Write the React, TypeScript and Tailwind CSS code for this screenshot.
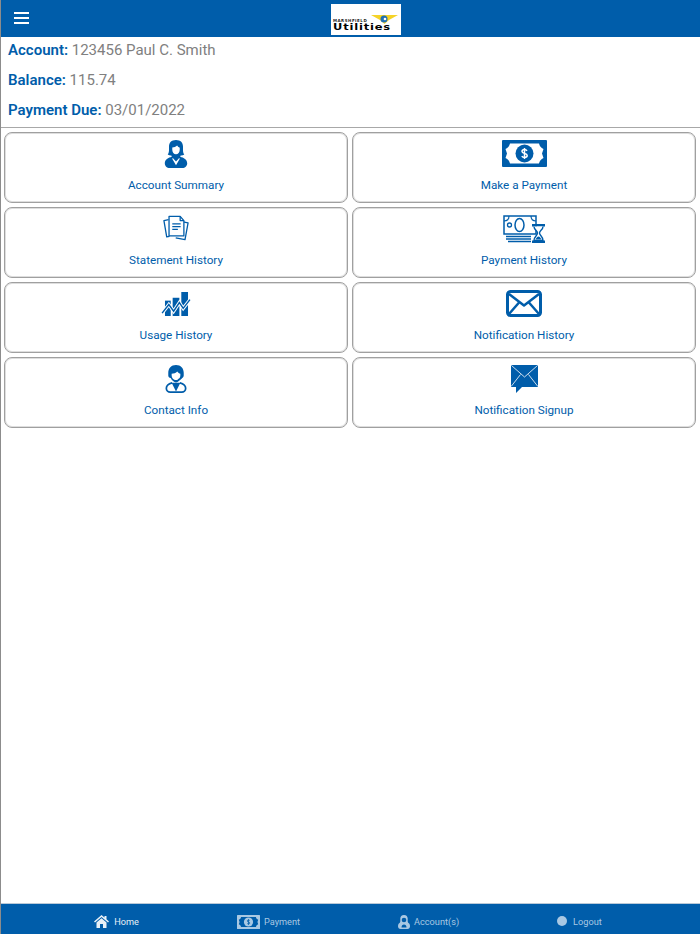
import { ReactNode } from "react";

const BLUE = "#005daa";

function AgentIcon() {
  return (
    <svg width="24" height="28" viewBox="0 0 24 30" fill={BLUE}>
      <path d="M12 0C7 0 4.500 3 4.500 7v4c0 2-.6 3.600-1.400 4.600 1.300.8 2.700 1 3.900.9L7.500 18C3.800 19 0 20.800 0 25c0 2.600 2 5 4 5h16c2 0 4-2.400 4-5 0-4.200-3.800-6-7.500-7l.5-1.500c1.200.1 2.600-.1 3.900-.9C20 14.600 19.500 13 19.500 11V7c0-4-2.500-7-7.500-7z" />
      <path d="M8 8c2 0 3.900-.6 5.200-2 .8 1.300 1.800 2 2.800 2.300v2.200c0 2.700-1.700 4.800-4 4.800s-4-2.100-4-4.800z" fill="#fff" />
      <path d="M8.800 19.500 12 23l3.200-3.500 1 .4L12 27l-4.200-7.100z" fill="#fff" />
    </svg>
  );
}

function CashIcon({ fill = BLUE, hole = "#fff", w = 45, h = 27 }: { fill?: string; hole?: string; w?: number; h?: number }) {
  return (
    <svg width={w} height={h} viewBox="0 0 45 27">
      <rect width="45" height="27" rx="1" fill={fill} />
      <path d="M8 3.500h29c.5 2.500 2 4.500 4.500 5.500l-1.500 4.500 1.500 4.500c-2.500 1-4 3-4.500 5.500H8c-.5-2.500-2-4.500-4.500-5.500L5 13.500 3.500 9C6 8 7.500 6 8 3.500z" fill={hole} />
      <circle cx="22.500" cy="13.500" r="9" fill={fill} />
      <path d="M25 10.800c-.5-.8-1.400-1.200-2.500-1.200-1.400 0-2.500.8-2.500 1.900 0 2.600 5.200 1.400 5.200 4 0 1.100-1.200 1.900-2.700 1.900-1.200 0-2.200-.5-2.700-1.300M22.500 8v11" fill="none" stroke={hole} strokeWidth="1.500" />
    </svg>
  );
}

function DocsIcon() {
  return (
    <svg width="26" height="26" viewBox="0 0 28 27" fill="none" stroke={BLUE} strokeWidth="1.400" strokeLinejoin="round">
      <path d="M6 4.500 1 5.500l3 17.500 3-.6" />
      <path d="M21.500 7 27 8l-3.300 18-10-1.800" />
      <path d="M6.500 1h12l4 4.500V22h-16z" fill="#fff" />
      <path d="M18.500 1v4.500h4" />
      <path d="M10 9h9M10 12h9M10 15h6" strokeWidth="1.500" />
    </svg>
  );
}

function CashHourglassIcon() {
  return (
    <svg width="42" height="28" viewBox="0 0 42 28" fill="none" stroke={BLUE}>
      <rect x="1" y="1" width="32" height="18" strokeWidth="1.500" />
      <path d="M1 6c3 0 5-2 5-5M28 1c0 3 2 5 5 5" strokeWidth="1.200" />
      <ellipse cx="16.500" cy="10" rx="4.500" ry="6.500" strokeWidth="1.500" />
      <circle cx="6.500" cy="10" r="2" strokeWidth="1.300" />
      <path d="M3 21.500h25M3 24h25M5 26.500h23" strokeWidth="1.300" />
      <path d="M29 9h13v2.500H29zM29 25.500h13V28H29z" fill={BLUE} stroke="#fff" strokeWidth="0" />
      <path d="M31 11.500c0 3.500 3.500 3.800 3.500 6.500S31 21.500 31 25.500h9c0-4-3.500-5-3.500-7.500s3.500-3 3.500-6.500" fill="#fff" strokeWidth="1.400" />
      <path d="M32.500 24.500c1-2 2-3 3-3s2 1 3 3z" fill={BLUE} stroke="none" />
    </svg>
  );
}

function ChartIcon() {
  return (
    <svg className="mt-[2px]" width="31" height="24" viewBox="0 0 30 25" fill={BLUE}>
      <rect x="3" y="9" width="6" height="16" />
      <rect x="11" y="6" width="7" height="19" />
      <rect x="20" y="0" width="7" height="25" />
      <path d="M0 22 7 13l5 7 6-9 4 6 7-9" fill="none" stroke="#fff" strokeWidth="3.500" />
      <path d="M0 22 7 13l5 7 6-9 4 6 7-9" fill="none" stroke={BLUE} strokeWidth="1.500" />
    </svg>
  );
}

function HeadsetIcon() {
  return (
    <svg width="22" height="28" viewBox="0 0 22 29" fill="none">
      <path d="M11 0C6 0 3 3.500 3 8v3c0 1.500 1 2.500 2.500 2.500C6.700 16 9 18 11 18c2 0 4.300-2 5.500-4.500 1.500 0 2.500-1 2.500-2.500V8c0-4.500-3-8-8-8z" fill={BLUE} />
      <path d="M6.500 9c2 0 4.500-.8 5.800-2.300.9 1.200 2 2 3.200 2.300v1.500c0 2.800-2 5-4.500 5s-4.500-2.200-4.500-5z" fill="#fff" />
      <path d="M17.500 11c0 3-2 4-4.500 4" stroke={BLUE} strokeWidth="1.200" />
      <path d="M7 18.500C3.500 19.500 1 21 1 24c0 2.500 2 4 4 4h12c2 0 4-1.500 4-4 0-3-2.500-4.500-6-5.500" stroke={BLUE} strokeWidth="1.800" />
      <path d="M6.500 18.500h9L11 27.500z" fill={BLUE} />
    </svg>
  );
}

function EnvelopeIcon() {
  return (
    <svg width="36" height="27" viewBox="0 0 36 27" fill="none" stroke={BLUE} strokeWidth="3" strokeLinejoin="round">
      <rect x="1.500" y="1.500" width="33" height="24" rx="3" />
      <path d="M3 4 18 15.500 33 4M3 24l10.500-12M33 24 22.500 12" strokeWidth="2.500" />
    </svg>
  );
}

function MailBubbleIcon() {
  return (
    <svg width="27" height="28" viewBox="0 0 27 28">
      <path d="M0 1a1 1 0 0 1 1-1h25a1 1 0 0 1 1 1v20a1 1 0 0 1-1 1H11l-6 6v-6H1a1 1 0 0 1-1-1z" fill={BLUE} />
      <path d="M.5.500 13.500 12 26.500.500M.5 21l9-11.500M26.500 21l-9-11.500" fill="none" stroke="#fff" strokeWidth=".8" />
    </svg>
  );
}

function HomeIcon() {
  return (
    <svg width="15" height="13" viewBox="0 0 15 13" fill="#e8f0f7">
      <path d="M7.500 0 0 6.500l1 1 6.500-5.500L14 7.500l1-1-2.500-2.200V1h-2v1.600z" />
      <path d="M2.500 7.500 7.500 3.200l5 4.300V13H9V9H6v4H2.500z" />
    </svg>
  );
}

function PersonIcon() {
  return (
    <svg width="12" height="14" viewBox="0 0 12 14" fill="#a9c8e3">
      <path d="M6 0C3.500 0 2.300 1.600 2.300 3.600V6c0 1-.4 1.600-.8 2C.5 8.700 0 9.800 0 11.200 0 12.800 1 14 2.500 14h7c1.500 0 2.500-1.200 2.500-2.800 0-1.400-.5-2.500-1.500-3.200-.4-.4-.8-1-.8-2V3.600C9.700 1.600 8.500 0 6 0z" />
      <circle cx="6" cy="5" r="2.300" fill={BLUE} />
      <path d="M3.500 12.500c0-2 1-3 2.500-3s2.500 1 2.500 3z" fill={BLUE} />
    </svg>
  );
}

const tiles: { label: string; icon: ReactNode }[] = [
  { label: "Account Summary", icon: <AgentIcon /> },
  { label: "Make a Payment", icon: <CashIcon /> },
  { label: "Statement History", icon: <DocsIcon /> },
  { label: "Payment History", icon: <CashHourglassIcon /> },
  { label: "Usage History", icon: <ChartIcon /> },
  { label: "Notification History", icon: <EnvelopeIcon /> },
  { label: "Contact Info", icon: <HeadsetIcon /> },
  { label: "Notification Signup", icon: <MailBubbleIcon /> },
];

export default function App() {
  return (
    <div className="h-[934px] flex flex-col bg-white font-['Roboto',sans-serif] overflow-hidden border-l border-[#8c8c8c]">
      {/* Header */}
      <header className="h-[37px] shrink-0 bg-[#005daa] flex items-center relative">
        <div className="ml-[13px] flex flex-col gap-[3px] w-[15px] -mt-[1px]">
          <span className="h-[2px] bg-white" />
          <span className="h-[2px] bg-white" />
          <span className="h-[2px] bg-white" />
        </div>
        <div className="absolute left-[330px] top-[4px] w-[70px] h-[31px] bg-white flex flex-col items-start pt-[15px] pl-[2px] overflow-hidden">
          <svg className="absolute left-[40px] top-[11px]" width="27" height="10" viewBox="0 0 27 10">
            <path d="M0 0h27l-9 5-4.500 4L9 5z" fill="#f5d327" />
            <circle cx="13" cy="4" r="3.500" fill="#1f6fb2" />
            <circle cx="14" cy="4" r="1.300" fill="#fff" />
          </svg>
          <span className="relative text-[4px] leading-[4px] font-bold text-[#222] tracking-[0.5px] font-['DejaVu_Sans',sans-serif]">MARSHFIELD</span>
          <span className="relative text-[8.500px] leading-[8px] font-bold text-black tracking-[0.6px] font-['DejaVu_Sans',sans-serif] scale-x-[1.35] origin-left">Utilities</span>
        </div>
      </header>

      {/* Account info */}
      <div className="h-[91px] shrink-0 px-[7px] border-b border-[#a8a8a8] text-[15px] text-[#808080]">
        <p className="h-[30px] pt-[2px] leading-[22px]"><span className="font-semibold text-[#005daa]">Account:</span> 123456 Paul C. Smith</p>
        <p className="h-[30px] pt-[2px] leading-[22px]"><span className="font-semibold text-[#005daa]">Balance:</span> 115.74</p>
        <p className="h-[30px] pt-[2px] leading-[22px]"><span className="font-semibold text-[#005daa]">Payment Due:</span> 03/01/2022</p>
      </div>

      {/* Menu tiles */}
      <div className="flex-1 grid grid-cols-2 auto-rows-[71px] content-start gap-[4px] pl-[3px] pr-[4px] pt-[4px]">
        {tiles.map((t) => (
          <button key={t.label} className="rounded-[8px] border border-[#a0a0a0] shadow-[inset_0_0_0_1px_#dedede] flex flex-col items-center bg-white">
            <div className="h-[37px] mt-[7px] flex items-start justify-center">{t.icon}</div>
            <span className="text-[11.700px] leading-[16px] text-[#005daa]">{t.label}</span>
          </button>
        ))}
      </div>

      {/* Bottom tabs */}
      <footer className="h-[31px] shrink-0 bg-[#005daa] border-t border-[#b9c9d8] flex items-center justify-center gap-[98px] text-[9.200px] text-[#a9c8e3] pr-[5px] pt-[5px]">
        <div className="flex items-center gap-[5px] text-[#e8f0f7]"><HomeIcon />Home</div>
        <div className="flex items-center gap-[4px]"><CashIcon fill="#a9c8e3" hole="#005daa" w={23} h={14} />Payment</div>
        <div className="flex items-center gap-[4px]"><PersonIcon />Account(s)</div>
        <div className="flex items-center gap-[6px]"><span className="w-[10px] h-[10px] rounded-full bg-[#a9c8e3]" />Logout</div>
      </footer>
    </div>
  );
}
